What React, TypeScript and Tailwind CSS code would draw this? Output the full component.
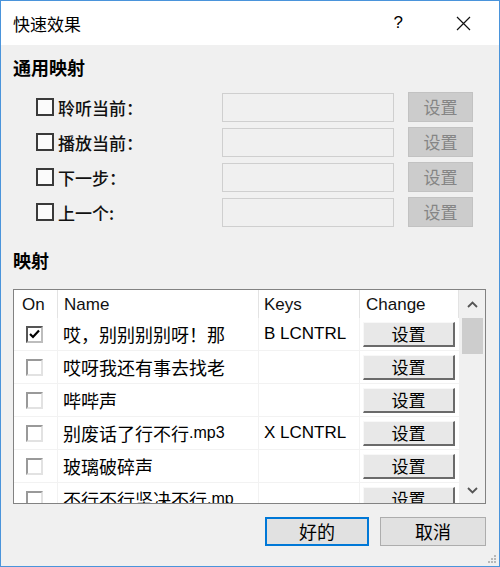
import React from "react";

const cjk = { fontFamily: '"Microsoft YaHei", "Noto Sans CJK SC", "Noto Sans", sans-serif' };
const latin = { fontFamily: '"Liberation Sans", "Noto Sans CJK SC", sans-serif' };

function Box() {
  return <div className="w-[18px] h-[18px] border-2 border-[#3a3a3a] bg-[#fbfbfb] shrink-0" />;
}

function TopRow({ label }: { label: string }) {
  return (
    <div className="flex items-center h-[30px] ml-[23px]">
      <div className="w-[186px] flex items-center">
        <Box />
        <span className="ml-[4px] text-[17px] text-[#111] font-medium leading-none" style={cjk}>
          {label}
        </span>
      </div>
      <div className="w-[172px] h-[29px] border border-[#cfcfcf] bg-[#f0f0f0]" />
      <div
        className="ml-[14px] w-[65px] h-[30px] bg-[#cccccc] border border-[#c2c2c2] flex items-center justify-center text-[17px] text-[#858585]"
        style={cjk}
      >
        设置
      </div>
    </div>
  );
}

const rows = [
  { on: true, name: "哎，别别别别呀！那", keys: "B LCNTRL" },
  { on: false, name: "哎呀我还有事去找老", keys: "" },
  { on: false, name: "哔哔声", keys: "" },
  { on: false, name: "别废话了行不行", ext: ".mp3", keys: "X LCNTRL" },
  { on: false, name: "玻璃破碎声", keys: "" },
  { on: false, name: "不行不行坚决不行", ext: ".mp", keys: "" },
];

function RowCheck({ checked }: { checked: boolean }) {
  if (checked) {
    return (
      <div className="w-[17px] h-[17px] border-2 border-t-[#555] border-l-[#555] border-r-[#bdbdbd] border-b-[#bdbdbd] bg-white flex items-center justify-center">
        <svg width="11" height="10" viewBox="0 0 11 10">
          <path d="M1 5 L4 8 L10 1.5" stroke="#000" strokeWidth="2.2" fill="none" />
        </svg>
      </div>
    );
  }
  return (
    <div className="w-[17px] h-[17px] border-2 border-t-[#999] border-l-[#999] border-r-[#e2e2e2] border-b-[#e2e2e2] bg-white" />
  );
}

function SetButton() {
  return (
    <div
      className="w-[92px] h-[25px] bg-[#e8e8e8] border border-t-[#f8f8f8] border-l-[#f8f8f8] border-r-2 border-b-2 border-r-[#6a6a6a] border-b-[#6a6a6a] flex items-center justify-center text-[17px] text-black"
      style={cjk}
    >
      设置
    </div>
  );
}

export default function App() {
  return (
    <div className="w-[500px] h-[567px] border border-[#4a94db] bg-[#f0f0f0] flex flex-col overflow-hidden relative">
      {/* Title bar */}
      <div className="h-[44px] bg-white flex items-center pl-3 shrink-0">
        <span className="text-[17px] text-black mt-[1px]" style={cjk}>
          快速效果
        </span>
        <span className="ml-auto text-[17px] text-black" style={latin}>
          ?
        </span>
        <svg className="ml-[53px] mr-[28px]" width="15" height="15" viewBox="0 0 15 15">
          <path d="M1 1 L14 14 M14 1 L1 14" stroke="#111" strokeWidth="1.2" fill="none" />
        </svg>
      </div>

      {/* Body */}
      <div className="flex-1 flex flex-col pl-3 pr-[13px]">
        <div className="mt-[11px] h-[22px] flex items-center text-[18px] font-bold text-black" style={cjk}>
          通用映射
        </div>
        <div className="mt-[14px] flex flex-col gap-[5px]">
          <TopRow label="聆听当前：" />
          <TopRow label="播放当前：" />
          <TopRow label="下一步：" />
          <TopRow label="上一个:" />
        </div>
        <div className="mt-[22px] h-[22px] flex items-center text-[18px] font-bold text-black" style={cjk}>
          映射
        </div>

        {/* Table */}
        <div className="mt-[18px] h-[215px] border border-[#828282] bg-white flex overflow-hidden">
          <div className="flex flex-col w-[445px]">
            <div className="grid grid-cols-[44px_201px_101px_99px] h-[28px] shrink-0 text-[17px] text-[#111]" style={latin}>
              <div className="pl-[8px] pt-[2px] flex items-center border-r border-[#e3e3e3]">On</div>
              <div className="pl-[6px] pt-[2px] flex items-center border-r border-[#e3e3e3]">Name</div>
              <div className="pl-[5px] pt-[2px] flex items-center border-r border-[#e3e3e3]">Keys</div>
              <div className="pl-[6px] pt-[2px] flex items-center border-r border-[#e3e3e3]">Change</div>
            </div>
            {rows.map((r, i) => (
              <div key={i} className="grid grid-cols-[44px_201px_101px_99px] h-[33px] shrink-0 border-b border-[#f2f2f2]">
                <div className="pl-[12px] flex items-center border-r border-[#f2f2f2]">
                  <RowCheck checked={r.on} />
                </div>
                <div className="pl-[5px] flex items-center border-r border-[#f2f2f2] text-[18px] text-black whitespace-nowrap overflow-hidden" style={cjk}>
                  {r.name}
                  {r.ext && (
                    <span className="text-[16px]" style={latin}>
                      {r.ext}
                    </span>
                  )}
                </div>
                <div className="pl-[5px] flex items-center border-r border-[#f2f2f2] text-[17px] text-black" style={latin}>
                  {r.keys}
                </div>
                <div className="pl-[3px] flex items-center">
                  <SetButton />
                </div>
              </div>
            ))}
          </div>
          {/* Scrollbar */}
          <div className="w-[26px] bg-[#f0f0f0] flex flex-col items-center relative">
            <div className="h-[28px] flex items-center justify-center">
              <svg width="11" height="7" viewBox="0 0 11 7">
                <path d="M1 6 L5.5 1.5 L10 6" stroke="#555" strokeWidth="1.8" fill="none" />
              </svg>
            </div>
            <div className="w-[21px] h-[36px] bg-[#cdcdcd]" />
            <div className="mt-auto h-[26px] flex items-center justify-center">
              <svg width="11" height="7" viewBox="0 0 11 7">
                <path d="M1 1 L5.5 5.5 L10 1" stroke="#555" strokeWidth="1.8" fill="none" />
              </svg>
            </div>
          </div>
        </div>

        {/* Bottom buttons */}
        <div className="mt-[13px] flex justify-end gap-[11px]">
          <div
            className="w-[104px] h-[29px] border-2 border-[#0078d7] bg-[#e1e1e1] flex items-center justify-center text-[18px] text-black"
            style={cjk}
          >
            好的
          </div>
          <div
            className="w-[106px] h-[29px] border border-[#adadad] bg-[#e1e1e1] flex items-center justify-center text-[18px] text-black"
            style={cjk}
          >
            取消
          </div>
        </div>
      </div>

      {/* Resize grip */}
      <svg className="absolute right-[2px] bottom-[2px]" width="10" height="10" viewBox="0 0 10 10">
        <rect x="7" y="1" width="2" height="2" fill="#b8b8b8" />
        <rect x="4" y="4" width="2" height="2" fill="#b8b8b8" />
        <rect x="7" y="4" width="2" height="2" fill="#b8b8b8" />
        <rect x="1" y="7" width="2" height="2" fill="#b8b8b8" />
        <rect x="4" y="7" width="2" height="2" fill="#b8b8b8" />
        <rect x="7" y="7" width="2" height="2" fill="#b8b8b8" />
      </svg>
    </div>
  );
}
